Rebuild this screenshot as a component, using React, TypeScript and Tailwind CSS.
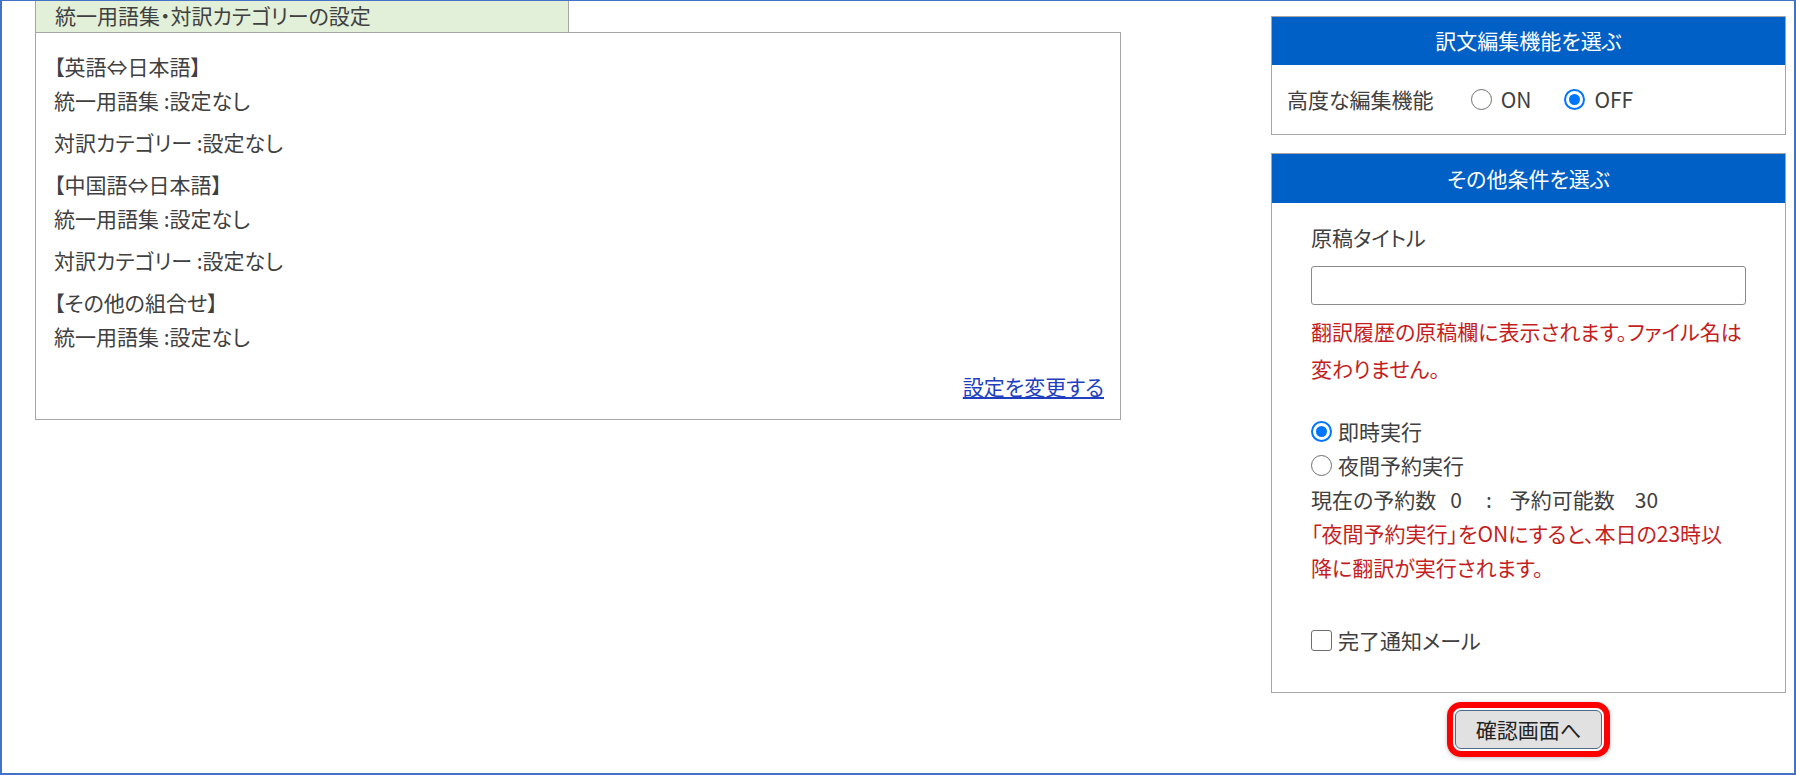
import React from 'react'

const font = { fontFamily: '"Noto Sans CJK JP", "Noto Sans", sans-serif' }

function Radio({ checked }: { checked?: boolean }) {
  return checked ? (
    <span className="inline-flex w-[21px] h-[21px] shrink-0 items-center justify-center rounded-full border-[2.5px] border-[#0075ff] bg-white">
      <span className="w-[11px] h-[11px] rounded-full bg-[#0075ff]" />
    </span>
  ) : (
    <span className="inline-block w-[21px] h-[21px] shrink-0 rounded-full border-[1.5px] border-[#6e6e6e] bg-white" />
  )
}

export default function App() {
  return (
    <div
      className="w-[1796px] h-[775px] box-border bg-white border-l-2 border-r-2 border-t border-b-2 border-[#4472c4] flex pl-[33px] pr-[8px] text-[21px] text-[#404040] overflow-hidden [font-feature-settings:'palt']"
      style={font}
    >
      {/* left: glossary settings */}
      <div className="w-[1086px] flex flex-col">
        <div className="w-[534px] h-[31px] bg-[#e2efd9] border-x border-[#a6a6a6] pl-[19px] leading-[29px] text-[21px]">
          統一用語集・対訳カテゴリーの設定
        </div>
        <div className="border border-[#a6a6a6] pt-[16px] pb-[16px] pl-[18px] pr-[16px] leading-[34px]">
          <p className="mb-[8px]">
            【英語⇔日本語】
            <br />
            統一用語集 :設定なし
          </p>
          <p className="mb-[8px]">対訳カテゴリー :設定なし</p>
          <p className="mb-[8px]">
            【中国語⇔日本語】
            <br />
            統一用語集 :設定なし
          </p>
          <p className="mb-[8px]">対訳カテゴリー :設定なし</p>
          <p>
            【その他の組合せ】
            <br />
            統一用語集 :設定なし
          </p>
          <div className="mt-[16px] text-right">
            <a href="#" className="text-[#1f3fc0] underline underline-offset-2">
              設定を変更する
            </a>
          </div>
        </div>
      </div>

      {/* right: options */}
      <div className="w-[515px] ml-auto pt-[15px] flex flex-col items-center">
        <div className="w-full border border-[#a6a6a6]">
          <div className="h-[48px] bg-[#0060c6] text-white flex items-center justify-center">
            訳文編集機能を選ぶ
          </div>
          <div className="h-[69px] flex items-center pl-[15px]">
            <span>高度な編集機能</span>
            <label className="flex items-center gap-[9px] ml-[37px]">
              <Radio />
              <span>ON</span>
            </label>
            <label className="flex items-center gap-[9px] ml-[33px]">
              <Radio checked />
              <span>OFF</span>
            </label>
          </div>
        </div>

        <div className="w-full border border-[#a6a6a6] mt-[18px]">
          <div className="h-[49px] bg-[#0060c6] text-white flex items-center justify-center">
            その他条件を選ぶ
          </div>
          <div className="px-[39px] pt-[17px] pb-[35px]">
            <div className="leading-[34px]">原稿タイトル</div>
            <input
              type="text"
              className="mt-[12px] w-full h-[39px] rounded-[3px] border border-[#8a8a8a] bg-white outline-none"
            />
            <p className="mt-[8px] leading-[37px] text-[#c41e1e] whitespace-nowrap">
              翻訳履歴の原稿欄に表示されます。ファイル名は
              <br />
              変わりません。
            </p>
            <div className="mt-[27px] leading-[34px]">
              <label className="flex items-center gap-[6px]">
                <Radio checked />
                <span>即時実行</span>
              </label>
              <label className="flex items-center gap-[6px]">
                <Radio />
                <span>夜間予約実行</span>
              </label>
              <div className="flex">
                <span>現在の予約数</span>
                <span className="ml-[14px]">0</span>
                <span className="ml-[24px]">:</span>
                <span className="ml-[18px]">予約可能数</span>
                <span className="ml-[20px]">30</span>
              </div>
              <p className="text-[#c41e1e] whitespace-nowrap">
                「夜間予約実行」をONにすると、本日の23時以
                <br />
                降に翻訳が実行されます。
              </p>
            </div>
            <label className="mt-[39px] flex items-center gap-[6px] leading-[34px]">
              <span className="inline-block w-[21px] h-[21px] rounded-[3px] border-[1.5px] border-[#6e6e6e] bg-white" />
              <span>完了通知メール</span>
            </label>
          </div>
        </div>

        <div className="mt-[9px] rounded-[14px] border-[6px] border-[#ff0000] p-[2px] shadow-[0_1px_4px_rgba(0,0,0,0.25)]">
          <button className="w-[147px] h-[39px] rounded-[6px] border border-[#4f6a8c] bg-[#e1e1e1] text-[21px] text-[#222]">
            確認画面へ
          </button>
        </div>
      </div>
    </div>
  )
}
